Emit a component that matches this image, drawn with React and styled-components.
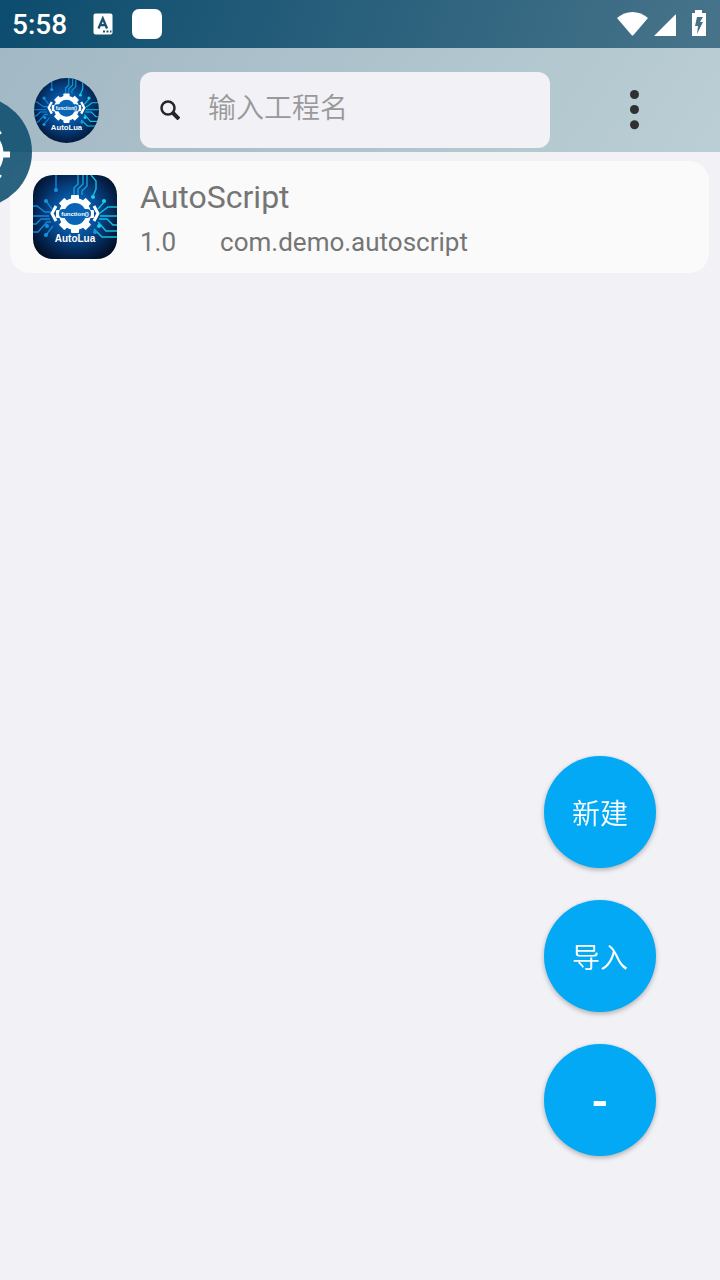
import { useState } from "react";
import styled, { createGlobalStyle } from "styled-components";

const projects = [
  { name: "AutoScript", version: "1.0", pkg: "com.demo.autoscript" },
];

function StatusIcons() {
  return (
    <svg width="90" height="30" viewBox="0 0 90 30" fill="#fff" aria-hidden="true">
      <path d="M1 9 C10 1 23 1 32 9 L17.500 26 Q16.500 27 15.500 26 Z" />
      <path d="M38 27 L59 6 Q60 5 60 6 V27 Z" />
      <path
        fillRule="evenodd"
        d="M79 1 h7 v3 h4 v23 h-14 v-23 h3 z M81 8 l-2 9 h3 l-1 8 l6 -12 h-3 l3 -5 z"
      />
    </svg>
  );
}

function KeyboardIcon() {
  return (
    <svg width="20" height="22" viewBox="0 0 20 22" aria-hidden="true">
      <rect x="0.500" y="0.500" width="19" height="21" rx="2" fill="#fff" />
      <path d="M5.500 15.500 L9.800 5.500 L14 15.500 M7 12.200 H12.600" fill="none" stroke="#1a5272" strokeWidth="2.300" />
      <path d="M10 18.500h2M13.500 18.500h2M17 18.500h1.500" stroke="#1a5272" strokeWidth="2" />
    </svg>
  );
}

function Logo({ id }) {
  const teeth = [0, 45, 90, 135, 180, 225, 270, 315];
  return (
    <svg width="100%" height="100%" viewBox="0 0 84 84" aria-hidden="true">
      <defs>
        <radialGradient id={id} cx="50%" cy="46%" r="64%">
          <stop offset="0" stopColor="#0a80dc" />
          <stop offset="0.400" stopColor="#06509a" />
          <stop offset="0.750" stopColor="#042450" />
          <stop offset="1" stopColor="#020c20" />
        </radialGradient>
      </defs>
      <rect width="84" height="84" fill={`url(#${id})`} />
      <g fill="none" stroke="#1286d8" strokeWidth="1.400">
        <path d="M23 0V14M19 34L13 26M18 37H12L4 31H0M16 41H0M17 44H8L3 49H0M18 47H14L5 57H0M20 51L13 60" />
        <path d="M41 20V13L45 9V0M45 20V14L50 9V0M49 20V16L54 11V0" stroke="#13a0d5" />
        <path d="M58 0L63 6V14L60 21M65 34L72 26M67 38L75 32H84M67 41H84M66 44H74L80 50H84M65 47L73 56H84M61 54L69 62H84" stroke="#12c1df" />
      </g>
      <g fill="#1595dc">
        <circle cx="23" cy="15" r="2" />
        <circle cx="13" cy="26" r="2" />
        <circle cx="14" cy="51" r="2" />
        <circle cx="13" cy="60" r="2" />
        <circle cx="62" cy="57" r="2" />
      </g>
      <g fill="#19d3e7">
        <circle cx="60" cy="22" r="2" />
        <circle cx="71" cy="26" r="2" />
        <circle cx="66" cy="51" r="2" />
      </g>
      <g fill="#fff">
        <circle cx="42" cy="39" r="16" />
        {teeth.map((angle) => (
          <rect key={angle} x="38" y="20" width="8" height="8" rx="1" transform={`rotate(${angle} 42 39)`} />
        ))}
      </g>
      <circle cx="42" cy="39" r="11" fill="#0865b5" />
      <rect x="26" y="34" width="32" height="9" rx="4" fill="#0865b5" />
      <path d="M23 31L19 38.500L23 46M61 31L65 38.500L61 46" fill="none" stroke="#fff" strokeWidth="3" />
      <LogoText x="42" y="41" $size={6}>function()</LogoText>
      <LogoText x="42" y="67" $size={10}>AutoLua</LogoText>
    </svg>
  );
}

function FloatingGear() {
  return (
    <svg width="112" height="112" viewBox="0 0 112 112" aria-hidden="true">
      <g fill="none" stroke="#fff">
        <circle cx="56" cy="58" r="24" strokeWidth="7" />
        <path d="M82 58.500H90" strokeWidth="6" />
        <path d="M74 41L81 36M74 76L81 81" strokeWidth="3" />
      </g>
    </svg>
  );
}

function App() {
  const [keyword, setKeyword] = useState("");
  const shown = projects.filter((p) =>
    p.name.toLowerCase().includes(keyword.toLowerCase())
  );

  return (
    <Page>
      <GlobalStyle />
      <StatusBar>
        <Clock>5:58</Clock>
        <KeyboardIcon />
        <BlankIcon />
        <StatusIcons />
      </StatusBar>
      <Header>
        <Avatar>
          <Logo id="avatarGlow" />
        </Avatar>
        <SearchBox>
          <svg width="20" height="20" viewBox="0 0 20 20" fill="none" stroke="#252528" aria-hidden="true">
            <circle cx="8" cy="8" r="6.500" strokeWidth="2.500" />
            <path d="M13 13L19 19" strokeWidth="4" />
          </svg>
          <SearchInput
            type="text"
            aria-label="输入工程名"
            placeholder="输入工程名"
            value={keyword}
            onChange={(e) => setKeyword(e.target.value)}
          />
        </SearchBox>
        <MenuButton type="button" aria-label="菜单">
          <svg width="10" height="40" viewBox="0 0 10 40" fill="#303030" aria-hidden="true">
            <circle cx="4.500" cy="4.500" r="4.500" />
            <circle cx="4.500" cy="19.500" r="4.500" />
            <circle cx="4.500" cy="34.700" r="4.500" />
          </svg>
        </MenuButton>
      </Header>
      <ProjectList>
        {shown.map((p) => (
          <ProjectCard key={p.pkg}>
            <ProjectIcon>
              <Logo id="projectGlow" />
            </ProjectIcon>
            <ProjectText>
              <ProjectName>{p.name}</ProjectName>
              <ProjectInfo>
                <span>{p.version}</span>
                <span>{p.pkg}</span>
              </ProjectInfo>
            </ProjectText>
          </ProjectCard>
        ))}
      </ProjectList>
      <FloatingBall type="button" aria-label="设置">
        <FloatingGear />
      </FloatingBall>
      <Actions>
        <ActionButton type="button">新建</ActionButton>
        <ActionButton type="button">导入</ActionButton>
        <ActionButton type="button" $bold>-</ActionButton>
      </Actions>
    </Page>
  );
}

const GlobalStyle = createGlobalStyle`
  * {
    box-sizing: border-box;
  }
  body {
    margin: 0;
    background-color: #f1f1f6;
    font-family: Roboto, "Noto Sans CJK SC", sans-serif;
  }
  button, input {
    font-family: inherit;
    border: none;
    padding: 0;
  }
  svg {
    display: block;
  }
`;

const Page = styled.div`
  min-height: 100vh;
`;

const StatusBar = styled.div`
  display: flex;
  align-items: center;
  height: 48px;
  padding: 0 14px 0 12px;
  background: linear-gradient(110deg, #0c4c6e, #47748a);
  > svg:last-child {
    margin-left: auto;
  }
`;

const Clock = styled.span`
  width: 81px;
  color: #fff;
  font-size: 28px;
  font-weight: 500;
`;

const BlankIcon = styled.span`
  width: 30px;
  height: 30px;
  margin-left: 19px;
  border-radius: 7px;
  background-color: #fff;
`;

const Header = styled.header`
  display: flex;
  align-items: center;
  padding: 24px 0 4px 34px;
  background: linear-gradient(125deg, #a2b8c4, #bbced5);
`;

const Avatar = styled.div`
  flex: none;
  width: 65px;
  height: 65px;
  margin-right: 41px;
  border-radius: 50%;
  overflow: hidden;
`;

const SearchBox = styled.label`
  flex: 1;
  min-width: 0;
  display: flex;
  align-items: center;
  gap: 28px;
  height: 76px;
  padding: 0 20px;
  border-radius: 12px;
  background-color: #f1f1f6;
  svg {
    flex: none;
  }
`;

const SearchInput = styled.input`
  flex: 1;
  min-width: 0;
  height: 40px;
  padding-bottom: 4px;
  background: none;
  color: #333;
  font-size: 28px;
  font-weight: 350;
  outline: none;
  &::placeholder {
    color: #999;
    opacity: 1;
  }
`;

const MenuButton = styled.button`
  flex: none;
  display: flex;
  align-items: center;
  justify-content: center;
  width: 170px;
  height: 76px;
  background: none;
`;

const ProjectList = styled.main`
  display: flex;
  flex-direction: column;
  gap: 9px;
  padding: 9px 11px 9px 10px;
`;

const ProjectCard = styled.article`
  display: flex;
  align-items: center;
  gap: 23px;
  height: 112px;
  padding: 0 23px;
  border-radius: 20px;
  background-color: #fafafa;
  color: #757575;
`;

const ProjectIcon = styled.div`
  flex: none;
  width: 84px;
  height: 84px;
  border-radius: 20px;
  overflow: hidden;
`;

const ProjectText = styled.div`
  padding-top: 6px;
`;

const ProjectName = styled.h2`
  margin: 0;
  font-size: 32px;
  font-weight: 400;
  line-height: 44px;
`;

const ProjectInfo = styled.p`
  display: flex;
  gap: 44px;
  margin: 0;
  font-size: 26px;
  line-height: 46px;
`;

const LogoText = styled.text`
  fill: #fff;
  font-family: "Liberation Sans", sans-serif;
  font-size: ${(props) => props.$size}px;
  font-weight: 700;
  text-anchor: middle;
`;

const FloatingBall = styled.button`
  position: absolute;
  top: 96px;
  left: -80px;
  width: 112px;
  height: 112px;
  border-radius: 50%;
  background-color: rgba(13, 77, 109, 0.88);
`;

const Actions = styled.div`
  position: fixed;
  right: 64px;
  bottom: 124px;
  display: flex;
  flex-direction: column;
  gap: 32px;
`;

const ActionButton = styled.button`
  width: 112px;
  height: 112px;
  padding-top: ${(props) => (props.$bold ? "4px" : "0")};
  border-radius: 50%;
  background-color: #03a9f4;
  box-shadow: 0 2px 5px rgba(0, 0, 0, 0.28);
  color: #fff;
  font-size: ${(props) => (props.$bold ? "44px" : "28px")};
  font-weight: ${(props) => (props.$bold ? 700 : 350)};
`;

export default App;
